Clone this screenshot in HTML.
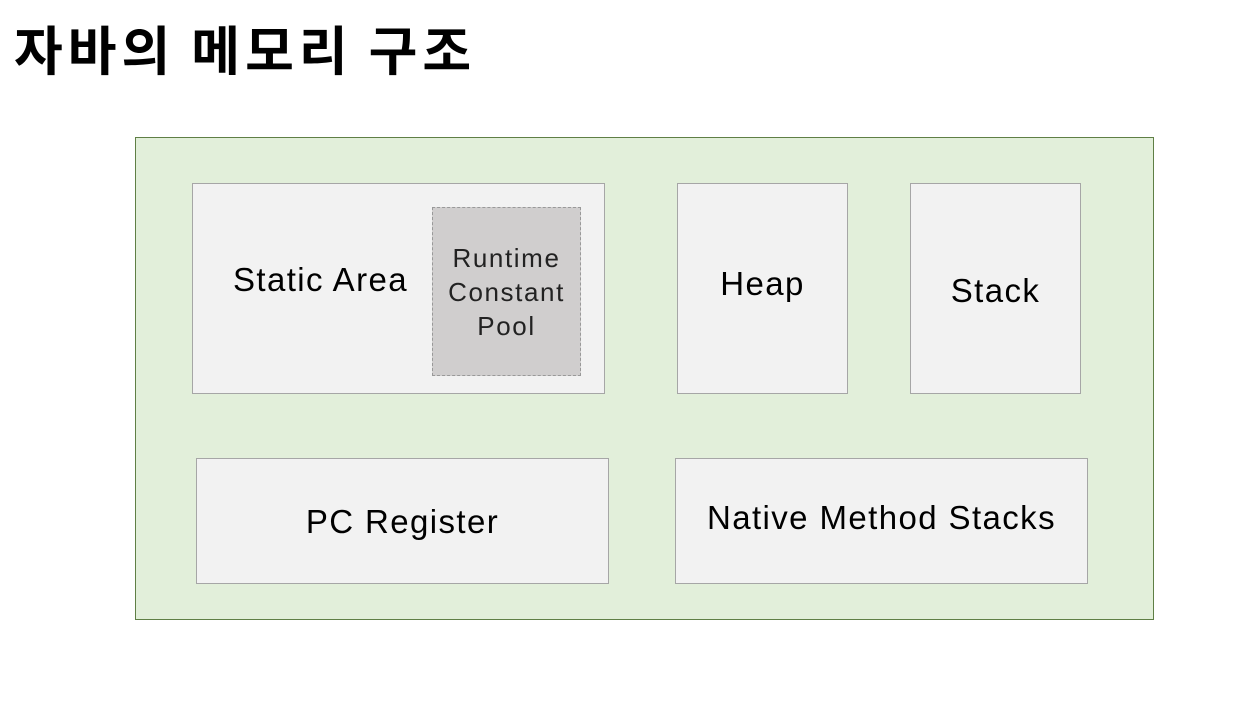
<!DOCTYPE html>
<html><head><meta charset="utf-8"><style>
body{margin:0;width:1244px;height:709px;background:#fff;position:relative;overflow:hidden;font-family:"Liberation Sans","Noto Sans CJK KR",sans-serif;}
.t{position:absolute;left:14px;top:8px;font-size:53px;font-weight:bold;font-family:"Noto Sans CJK KR",sans-serif;color:#000;letter-spacing:5px;line-height:80px;word-spacing:-1px}
.b{position:absolute;box-sizing:border-box;display:flex;align-items:center;justify-content:center;text-align:center;color:#000;letter-spacing:1.4px;white-space:nowrap}
.o{left:135px;top:137px;width:1019px;height:483px;background:#e2efda;border:1px solid #5f7f45}
.g{background:#f2f2f2;border:1px solid #a6a6a6;font-size:33px}
.r{left:432px;top:207px;width:149px;height:169px;background:#d0cece;border:1px dashed #999;font-size:26px;line-height:34px;color:#222;letter-spacing:1.6px}
</style></head><body>
<div class="t">자바의 메모리 구조</div>
<div class="b o"></div>
<div class="b g" style="left:192px;top:183px;width:413px;height:211px;justify-content:flex-start;padding-left:40px;padding-bottom:18px">Static Area</div>
<div class="b r">Runtime<br>Constant<br>Pool</div>
<div class="b g" style="left:677px;top:183px;width:171px;height:211px;padding-bottom:10px">Heap</div>
<div class="b g" style="left:910px;top:183px;width:171px;height:211px;padding-top:5px">Stack</div>
<div class="b g" style="left:196px;top:458px;width:413px;height:126px;padding-top:2px">PC Register</div>
<div class="b g" style="left:675px;top:458px;width:413px;height:126px;padding-bottom:6px">Native Method Stacks</div>
</body></html>
